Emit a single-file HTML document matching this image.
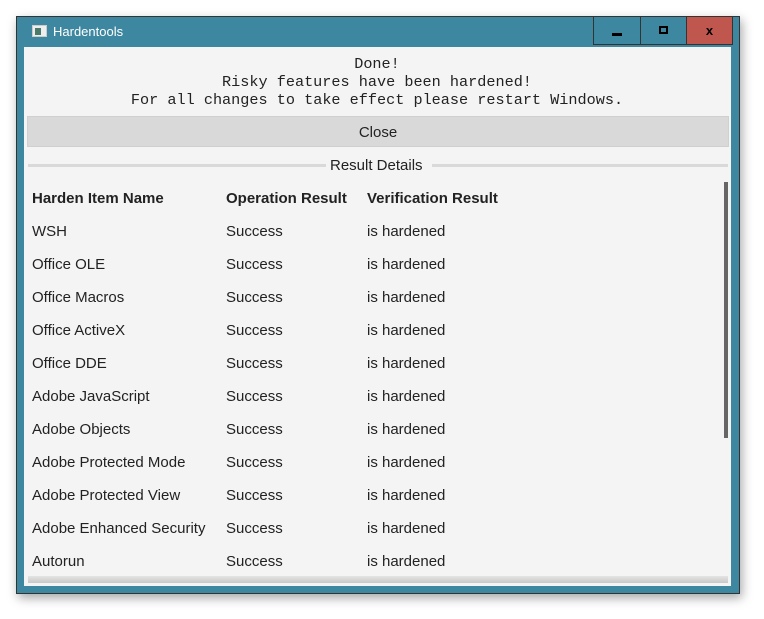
<!DOCTYPE html>
<html><head><style>
body{margin:0;width:764px;height:619px;background:#fff;position:relative;overflow:hidden;font-family:"Liberation Sans",sans-serif}
#win{position:absolute;left:16px;top:16px;width:722px;height:576px;background:#3e87a0;border:1px solid #333;box-shadow:2px 4px 10px rgba(0,0,0,.35)}
#title{position:absolute;left:53px;top:24px;font-size:13px;color:#fff}
.btn{position:absolute;top:16px;height:29px;border:1px solid #333;box-sizing:border-box;background:#3e87a0}
#content{position:absolute;left:24px;top:47px;width:707px;height:539px;background:#f4f4f4}
.mono{position:absolute;left:0;width:754px;text-align:center;font-family:"Liberation Mono",monospace;font-size:15.2px;color:#222}
.t{position:absolute;font-size:15px;color:#222}
.b{font-weight:bold}
</style></head><body>
<div id="win"></div>
<div style="position:absolute;left:32px;top:25px;width:15px;height:12px;background:#eee;border:1px solid #ccc;box-sizing:border-box"><div style="position:absolute;left:2px;top:2px;width:6px;height:7px;background:#4a7a6a"></div></div>
<div id="title">Hardentools</div>
<div class="btn" style="left:593px;width:48px"><div style="position:absolute;left:18px;top:16px;width:10px;height:3px;background:#000"></div></div>
<div class="btn" style="left:640px;width:47px"><div style="position:absolute;left:18px;top:9px;width:9px;height:8px;border:2px solid #000;box-sizing:border-box"></div></div>
<div class="btn" style="left:686px;width:47px;background:#c0574f;font-weight:bold;font-size:13px;text-align:center;line-height:27px;color:#000">x</div>
<div id="content"></div>
<div class="mono" style="top:55px">Done!</div>
<div class="mono" style="top:73px">Risky features have been hardened!</div>
<div class="mono" style="top:91px">For all changes to take effect please restart Windows.</div>
<div style="position:absolute;left:27px;top:116px;width:702px;height:31px;background:#d9d9d9;border:1px solid #d0d0d0;box-sizing:border-box;text-align:center;line-height:31px;font-size:15px;color:#222">Close</div>
<div style="position:absolute;left:28px;top:164px;width:298px;height:3px;background:#d9d9d9"></div>
<div style="position:absolute;left:432px;top:164px;width:296px;height:3px;background:#d9d9d9"></div>
<div class="t" style="left:330px;top:157px">Result Details</div>
<div class="t b" style="left:32px;top:190px">Harden Item Name</div>
<div class="t b" style="left:226px;top:190px">Operation Result</div>
<div class="t b" style="left:367px;top:190px">Verification Result</div>
<div id="rows"></div>
<div style="position:absolute;left:724px;top:182px;width:4px;height:256px;background:#666"></div>
<div style="position:absolute;left:28px;top:576px;width:700px;height:7px;background:linear-gradient(#e4e4e4,#c8c8c8)"></div>
<script>
var n=["WSH","Office OLE","Office Macros","Office ActiveX","Office DDE","Adobe JavaScript","Adobe Objects","Adobe Protected Mode","Adobe Protected View","Adobe Enhanced Security","Autorun"],h="";
n.forEach(function(s,i){var y=223+i*33;h+='<div class="t" style="left:32px;top:'+y+'px">'+s+'</div><div class="t" style="left:226px;top:'+y+'px">Success</div><div class="t" style="left:367px;top:'+y+'px">is hardened</div>';});
document.getElementById("rows").innerHTML=h;
</script>
</body></html>
